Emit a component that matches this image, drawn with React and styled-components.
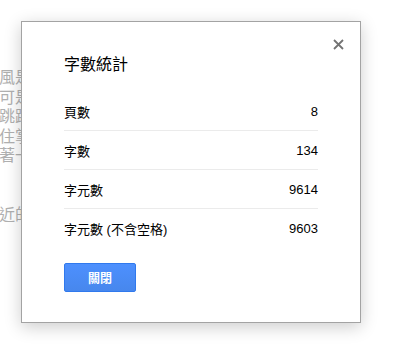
import styled, { createGlobalStyle } from "styled-components";

const GlobalStyle = createGlobalStyle`
  html, body {
    margin: 0;
    padding: 0;
    background: #fff;
  }
  body {
    font-family: "Liberation Sans", "Noto Sans CJK TC", sans-serif;
  }
`;

const stats = [
  { label: "頁數", value: "8" },
  { label: "字數", value: "134" },
  { label: "字元數", value: "9614" },
  { label: "字元數 (不含空格)", value: "9603" },
];

// only the edge of the document peeks out beside the dialog
const docLines = ["風是", "可是", "跳躍", "住掌", "著一", "", "", "近的"];

const App = () => {
  return (
    <Page>
      <GlobalStyle />
      <DocText>
        {docLines.map((line, i) => (
          <DocLine key={i}>{line || "\u00a0"}</DocLine>
        ))}
      </DocText>

      <Dialog>
        <CloseButton aria-label="關閉">
          <svg width="11" height="11" viewBox="0 0 11 11">
            <path d="M1 1 L10 10 M10 1 L1 10" stroke="#737373" strokeWidth="1.8" fill="none" />
          </svg>
        </CloseButton>

        <Title>字數統計</Title>

        <StatList>
          {stats.map((s) => (
            <StatRow key={s.label}>
              <span>{s.label}</span>
              <span>{s.value}</span>
            </StatRow>
          ))}
        </StatList>

        <PrimaryButton>關閉</PrimaryButton>
      </Dialog>
    </Page>
  );
};

const Page = styled.div`
  position: relative;
  width: 394px;
  height: 353px;
  overflow: hidden;
  background: #fff;
`;

const DocText = styled.div`
  padding-top: 68px;
  width: 21px;
  overflow: hidden;
  font-family: "Liberation Sans", "Noto Sans CJK TC", sans-serif;
  font-size: 16px;
  line-height: 19.6px;
  color: #b0b0b0;
  white-space: nowrap;
`;

const DocLine = styled.div`
  margin-left: -1px;
`;

const Dialog = styled.div`
  position: absolute;
  top: 21px;
  left: 21px;
  width: 254px;
  padding: 30px 42px;
  background: #fff;
  border: 1px solid #a3a3a3;
  box-shadow: 0 4px 16px rgba(0, 0, 0, 0.2);
  display: flex;
  flex-direction: column;
  align-items: flex-start;
`;

const CloseButton = styled.button`
  position: absolute;
  top: 17px;
  right: 16px;
  width: 11px;
  height: 11px;
  padding: 0;
  border: none;
  background: transparent;
  display: flex;
  cursor: pointer;
`;

const Title = styled.div`
  margin: 3px 0 17px;
  font-size: 16px;
  line-height: 20px;
  color: #000;
`;

const StatList = styled.div`
  width: 100%;
  display: flex;
  flex-direction: column;
`;

const StatRow = styled.div`
  height: 38px;
  display: flex;
  justify-content: space-between;
  align-items: center;
  font-size: 13px;
  color: #000;
  border-bottom: 1px solid #ebebeb;

  &:last-child {
    border-bottom: none;
  }
`;

const PrimaryButton = styled.button`
  margin-top: 16px;
  width: 72px;
  height: 29px;
  padding: 0;
  border: 1px solid #3079ed;
  border-radius: 2px;
  background: linear-gradient(#4d90fe, #4787ed);
  color: #fff;
  font-family: "Liberation Sans", "Noto Sans CJK TC", sans-serif;
  font-size: 12px;
  font-weight: bold;
  cursor: pointer;
`;

export default App;
